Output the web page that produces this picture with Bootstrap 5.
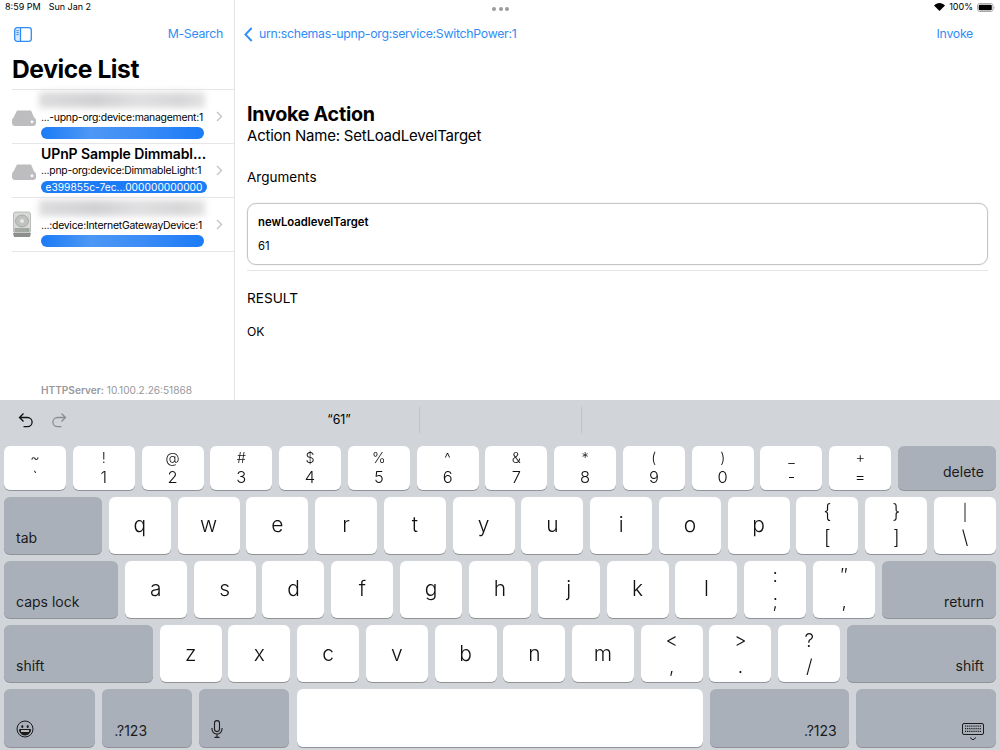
<!DOCTYPE html>
<html lang="en">
<head>
<meta charset="utf-8">
<title>Device List</title>
<link href="https://cdn.jsdelivr.net/npm/bootstrap@5.3.0/dist/css/bootstrap.min.css" rel="stylesheet">
<style>
html,body{width:1000px;height:750px;overflow:hidden;background:#fff;}
body{font-family:Inter,"Liberation Sans",sans-serif;color:#000;position:relative;}
.ios-blue{color:#2f8cf6;}
.top-area{height:400px;}
.side-pane{width:235px;flex:none;border-right:1px solid #e3e3e5;height:400px;}
.status-line{height:17px;font-size:9px;line-height:14px;padding-left:5px;}
.status-line .date-gap{margin-left:8px;}
.dots-over{position:absolute;top:7px;left:492px;width:17px;}
.dots-over i{display:block;width:4px;height:4px;border-radius:50%;background:#9b9ba0;}
.nav-row{height:33px;padding:1px 11px 0 14px;font-size:12.3px;letter-spacing:-.28px;}
.big-title{font-size:24.6px;font-weight:700;letter-spacing:-.42px;line-height:30px;margin:4px 0 0 12px;}
.dev-list{margin:5px 0 0 12px;border-top:1px solid #e6e6e8;}
.dev-row{height:54px;border-bottom:1px solid #e6e6e8;}
.dev-ico{width:29px;flex:none;}
.dev-body{width:168px;flex:none;align-self:flex-start;}
.dev-name{height:19px;font-size:14px;font-weight:600;line-height:20px;white-space:nowrap;letter-spacing:-.1px;}
.blurred{height:16px;margin:2px 0 2px -2px;width:166px;background:linear-gradient(90deg,#d4d4d6,#c6c6c9 35%,#d8d8da 60%,#cdcdcf 85%,#dcdcde);filter:blur(3px);opacity:.8;}
.dev-type{font-size:10.4px;line-height:16px;height:15px;white-space:nowrap;letter-spacing:-.24px;}
.dev-pill{display:block;height:12px;border-radius:6px;background:#1c7cf5;color:#fff;font-size:10.2px;line-height:12px;text-align:center;margin-top:2px;width:163px;white-space:nowrap;letter-spacing:.02px;}
.dev-pill.wide{width:166px;margin-top:3px;}
.dev-pill.fuzz{background:linear-gradient(90deg,#1b7bf6,#4d97f5 30%,#3d8df6 60%,#1b7bf6);}
.dev-chev{margin-left:7px;}
.srv-foot{margin-top:auto;font-size:10.1px;color:#98989d;padding:0 0 3px 41px;line-height:14px;}
.srv-foot b{font-weight:600;}
.main-pane{min-width:0;}
.status-right{height:17px;font-size:9px;line-height:14px;padding:0 5px 3px 0;}
.back-link{margin-left:-5px;gap:6px;}
.action-head{padding:52px 12px 0;}
.action-title{font-size:19.7px;font-weight:700;line-height:24px;margin:0;letter-spacing:-.25px;}
.action-sub{font-size:15px;line-height:20px;margin-top:0;letter-spacing:-.22px;}
.args-label{font-size:13.5px;line-height:18px;margin-top:22px;}
.arg-box{margin-top:17px;height:62px;border:1px solid #c5c5c8;border-radius:9px;padding:10px 10px;box-shadow:0 0 1px #bbb;}
.arg-name{font-size:11.3px;font-weight:600;line-height:16px;}
.arg-val{font-size:11.3px;line-height:16px;margin-top:8px;}
.rule-line{height:1px;background:#e6e6e8;margin-top:5px;}
.res-label{font-size:13.6px;line-height:18px;margin-top:18px;}
.res-val{font-size:12.2px;line-height:16px;margin-top:17px;}
.kb-wrap{height:350px;background:#d1d4d9;padding:0 4px;}
.sug-bar{height:46px;padding-bottom:6px;}
.sug-tools{width:255px;padding-left:14px;gap:17px;}
.sug-cell{width:160px;height:26px;font-size:12.4px;text-align:center;line-height:26px;}
.sug-gap{width:161px;}
.sug-sep{border-left:1px solid #bfc2c8;height:26px;}
.kb-row{justify-content:space-between;}
.kb-row.r1{height:44px;margin-bottom:7px;}
.kb-row.r2{height:56.5px;margin-bottom:7.5px;}
.kb-row.r3{height:56.5px;margin-bottom:7.5px;}
.kb-row.r4{height:57px;margin-bottom:7px;}
.kb-row.r5{height:58px;}
.kk{flex:none;width:62px;background:#fff;border-radius:6px;box-shadow:0 1px 0 #8f9298;display:flex;flex-direction:column;align-items:center;justify-content:center;color:#111;font-weight:300;}
.kk.fn{background:#aab0b9;align-items:flex-start;justify-content:flex-end;padding:0 12px 7px;font-size:14px;font-weight:400;line-height:18px;color:#1b1b1d;}
.r1 .kk.fn{padding-bottom:9px;}
.kk.fn.rt{align-items:flex-end;}
.kk.let{font-size:21px;line-height:26px;font-weight:300;filter:grayscale(1);}
.kk .up{font-size:14.5px;line-height:18px;filter:grayscale(1);}
.kk .dn{font-size:16.5px;line-height:20px;filter:grayscale(1);}
.kk.tall .up,.kk.tall .dn{font-size:19px;line-height:26px;}
.kk.tall .thin{font-size:16px;}
.w-tab{width:98px!important;}
.w-caps{width:114px!important;}
.w-shift{width:149px!important;}
.w-del{width:98px!important;}
.w-ret{width:114px!important;}
.w-a{width:91px!important;}
.w-b{width:90px!important;}
.w-space{width:406px!important;}
.w-c{width:139px!important;}
.w-d{width:140px!important;}
.kk.fn.ic{padding-bottom:9px;}
.kk.fn.kb-ic{padding-bottom:6px;}
</style>
</head>
<body>
<div class="dots-over d-flex justify-content-between"><i></i><i></i><i></i></div>

<div class="top-area d-flex">
  <div class="side-pane d-flex flex-column">
    <div class="status-line">8:59 PM<span class="date-gap">Sun Jan 2</span></div>
    <div class="nav-row d-flex align-items-center justify-content-between ios-blue">
      <svg width="18" height="15" viewBox="0 0 18 15" fill="none" stroke="#2f8cf6" stroke-width="1.3"><rect x=".7" y=".7" width="16.6" height="13.6" rx="2.5"/><path d="M6.5 1v13"/><path d="M1 1.5h5.5v12H1z" fill="#2f8cf6" fill-opacity=".18" stroke="none"/><path d="M2.4 3.6h2.4M2.4 5.6h2.4M2.4 7.6h2.4" stroke-width="1"/></svg>
      <span>M-Search</span>
    </div>
    <h1 class="big-title">Device List</h1>
    <div class="dev-list">
      <div class="dev-row d-flex align-items-center">
        <div class="dev-ico"><svg width="24" height="18" viewBox="0 0 24 18"><path d="M5 1.5h14l3.5 8H1z" fill="#bdbdc0"/><rect x="0" y="8.5" width="24" height="8.5" rx="3" fill="#bdbdc0"/><circle cx="20" cy="12.8" r="1.4" fill="#fff"/></svg></div>
        <div class="dev-body">
          <div class="blurred"></div>
          <div class="dev-type">...-upnp-org:device:management:1</div>
          <span class="dev-pill fuzz"></span>
        </div>
        <svg class="dev-chev" width="7" height="11" viewBox="0 0 7 11" fill="none" stroke="#c4c4c7" stroke-width="1.4"><path d="M1 1l4.5 4.5L1 10"/></svg>
      </div>
      <div class="dev-row d-flex align-items-center">
        <div class="dev-ico"><svg width="24" height="18" viewBox="0 0 24 18"><path d="M5 1.5h14l3.5 8H1z" fill="#bdbdc0"/><rect x="0" y="8.5" width="24" height="8.5" rx="3" fill="#bdbdc0"/><circle cx="20" cy="12.8" r="1.4" fill="#fff"/></svg></div>
        <div class="dev-body">
          <div class="dev-name">UPnP Sample Dimmabl...</div>
          <div class="dev-type">...pnp-org:device:DimmableLight:1</div>
          <span class="dev-pill wide">e399855c-7ec...000000000000</span>
        </div>
        <svg class="dev-chev" width="7" height="11" viewBox="0 0 7 11" fill="none" stroke="#c4c4c7" stroke-width="1.4"><path d="M1 1l4.5 4.5L1 10"/></svg>
      </div>
      <div class="dev-row d-flex align-items-center">
        <div class="dev-ico"><svg width="20" height="28" viewBox="0 0 20 28"><rect x="1.5" y="1" width="17" height="21" rx="2" fill="#d8dad8" stroke="#aeb0ae" stroke-width=".8"/><ellipse cx="10" cy="10" rx="6.5" ry="6" fill="#bfc2bf" stroke="#8f928f" stroke-width=".6"/><circle cx="10" cy="10" r="2" fill="#e8e8e8"/><rect x="2.5" y="17" width="15" height="4" fill="#a5a8a5"/><circle cx="15.5" cy="19" r=".9" fill="#5cc15c"/><path d="M1 22h18l-1 4H2z" fill="#8d8f8d"/></svg></div>
        <div class="dev-body">
          <div class="blurred"></div>
          <div class="dev-type">...:device:InternetGatewayDevice:1</div>
          <span class="dev-pill fuzz"></span>
        </div>
        <svg class="dev-chev" width="7" height="11" viewBox="0 0 7 11" fill="none" stroke="#c4c4c7" stroke-width="1.4"><path d="M1 1l4.5 4.5L1 10"/></svg>
      </div>
    </div>
    <div class="srv-foot"><b>HTTPServer:</b> 10.100.2.26:51868</div>
  </div>

  <div class="main-pane flex-grow-1 d-flex flex-column">
    <div class="status-right d-flex justify-content-end align-items-center gap-1">
      <svg width="11" height="8" viewBox="0 0 11 8"><path d="M5.5 8L0 2.6C3-.8 8-.8 11 2.6z" fill="#000"/></svg>
      <span>100%</span>
      <svg width="18" height="9" viewBox="0 0 18 9"><rect x=".5" y=".5" width="15.5" height="8" rx="2.2" fill="none" stroke="#a8a8a8"/><rect x="1.7" y="1.7" width="13.1" height="5.6" rx="1.2"/><path d="M16.8 3v3c.8-.3.8-2.7 0-3z" fill="#a8a8a8"/></svg>
    </div>
    <div class="nav-row d-flex align-items-center justify-content-between ios-blue">
      <span class="back-link d-flex align-items-center"><svg width="9" height="15" viewBox="0 0 9 15" fill="none" stroke="#2f8cf6" stroke-width="1.8"><path d="M7.7 1L1.4 7.5l6.3 6.5"/></svg><span>urn:schemas-upnp-org:service:SwitchPower:1</span></span>
      <span class="me-3">Invoke</span>
    </div>
    <div class="action-head">
      <h2 class="action-title">Invoke Action</h2>
      <div class="action-sub">Action Name: SetLoadLevelTarget</div>
      <div class="args-label">Arguments</div>
      <div class="arg-box">
        <div class="arg-name">newLoadlevelTarget</div>
        <div class="arg-val">61</div>
      </div>
      <div class="rule-line"></div>
      <div class="res-label">RESULT</div>
      <div class="res-val">OK</div>
    </div>
  </div>
</div>

<div class="kb-wrap">
  <div class="sug-bar d-flex align-items-center">
    <div class="sug-tools d-flex align-items-center">
      <svg width="16" height="16" viewBox="0 0 16 16" fill="none" stroke="#111" stroke-width="1.3"><path d="M5.5 1.5L1.5 5.5l4 4M1.5 5.5h8a4.6 4.6 0 010 9.2H5.5"/></svg>
      <svg width="16" height="16" viewBox="0 0 16 16" fill="none" stroke="#8b8d91" stroke-width="1.3"><path d="M10.5 1.5l4 4-4 4M14.5 5.5h-8a4.6 4.6 0 000 9.2h4"/></svg>
    </div>
    <div class="sug-cell">“61”</div>
    <div class="sug-sep"></div>
    <div class="sug-gap"></div>
    <div class="sug-sep"></div>
  </div>

  <div class="kb-row r1 d-flex">
    <div class="kk"><span class="up">~</span><span class="dn">`</span></div>
    <div class="kk"><span class="up">!</span><span class="dn">1</span></div>
    <div class="kk"><span class="up">@</span><span class="dn">2</span></div>
    <div class="kk"><span class="up">#</span><span class="dn">3</span></div>
    <div class="kk"><span class="up">$</span><span class="dn">4</span></div>
    <div class="kk"><span class="up">%</span><span class="dn">5</span></div>
    <div class="kk"><span class="up">^</span><span class="dn">6</span></div>
    <div class="kk"><span class="up">&amp;</span><span class="dn">7</span></div>
    <div class="kk"><span class="up">*</span><span class="dn">8</span></div>
    <div class="kk"><span class="up">(</span><span class="dn">9</span></div>
    <div class="kk"><span class="up">)</span><span class="dn">0</span></div>
    <div class="kk"><span class="up">_</span><span class="dn">-</span></div>
    <div class="kk"><span class="up">+</span><span class="dn">=</span></div>
    <div class="kk fn rt w-del">delete</div>
  </div>
  <div class="kb-row r2 d-flex">
    <div class="kk fn w-tab">tab</div>
    <div class="kk let">q</div><div class="kk let">w</div><div class="kk let">e</div><div class="kk let">r</div><div class="kk let">t</div><div class="kk let">y</div><div class="kk let">u</div><div class="kk let">i</div><div class="kk let">o</div><div class="kk let">p</div>
    <div class="kk tall"><span class="up">{</span><span class="dn">[</span></div>
    <div class="kk tall"><span class="up">}</span><span class="dn">]</span></div>
    <div class="kk tall"><span class="up thin">|</span><span class="dn">\</span></div>
  </div>
  <div class="kb-row r3 d-flex">
    <div class="kk fn w-caps">caps lock</div>
    <div class="kk let">a</div><div class="kk let">s</div><div class="kk let">d</div><div class="kk let">f</div><div class="kk let">g</div><div class="kk let">h</div><div class="kk let">j</div><div class="kk let">k</div><div class="kk let">l</div>
    <div class="kk tall"><span class="up">:</span><span class="dn">;</span></div>
    <div class="kk tall"><span class="up">″</span><span class="dn">,</span></div>
    <div class="kk fn rt w-ret">return</div>
  </div>
  <div class="kb-row r4 d-flex">
    <div class="kk fn w-shift">shift</div>
    <div class="kk let">z</div><div class="kk let">x</div><div class="kk let">c</div><div class="kk let">v</div><div class="kk let">b</div><div class="kk let">n</div><div class="kk let">m</div>
    <div class="kk tall"><span class="up">&lt;</span><span class="dn">,</span></div>
    <div class="kk tall"><span class="up">&gt;</span><span class="dn">.</span></div>
    <div class="kk tall"><span class="up">?</span><span class="dn">/</span></div>
    <div class="kk fn rt w-shift">shift</div>
  </div>
  <div class="kb-row r5 d-flex">
    <div class="kk fn ic w-a"><svg width="18" height="18" viewBox="0 0 18 18" fill="none" stroke="#1b1b1d" stroke-width="1"><circle cx="9" cy="9" r="8"/><ellipse cx="6.3" cy="6.5" rx="1" ry="1.5" fill="#1b1b1d" stroke="none"/><ellipse cx="11.7" cy="6.5" rx="1" ry="1.5" fill="#1b1b1d" stroke="none"/><path d="M3.5 9.5h11c0 3.5-2.5 5.5-5.5 5.5s-5.5-2-5.5-5.5z" fill="#1b1b1d"/><path d="M5 10.3h8v1.4H5z" fill="#fff" stroke="none"/></svg></div>
    <div class="kk fn w-b">.?123</div>
    <div class="kk fn ic w-b"><svg width="12" height="18" viewBox="0 0 12 18" fill="none" stroke="#1b1b1d" stroke-width="1.1"><rect x="3.5" y=".6" width="5" height="11" rx="2.5"/><path d="M1 8v1a5 5 0 0010 0V8M6 14v3.4M3.5 17.4h5"/></svg></div>
    <div class="kk w-space"></div>
    <div class="kk fn rt w-c">.?123</div>
    <div class="kk fn rt kb-ic w-d"><svg width="22" height="18" viewBox="0 0 22 18" fill="none" stroke="#1b1b1d" stroke-width="1"><rect x=".5" y=".5" width="21" height="11" rx="1.5"/><path d="M3 3.2h16M3 5.6h16" stroke-dasharray="1.2 .9" stroke-width="1.2"/><path d="M3 8.4h16" stroke-width="1.2" stroke-dasharray="1.2 .9"/><path d="M8 14.5l3 2.4 3-2.4"/></svg></div>
  </div>
</div>
<script src="https://cdn.jsdelivr.net/npm/bootstrap@5.3.0/dist/js/bootstrap.bundle.min.js"></script>
</body>
</html>
